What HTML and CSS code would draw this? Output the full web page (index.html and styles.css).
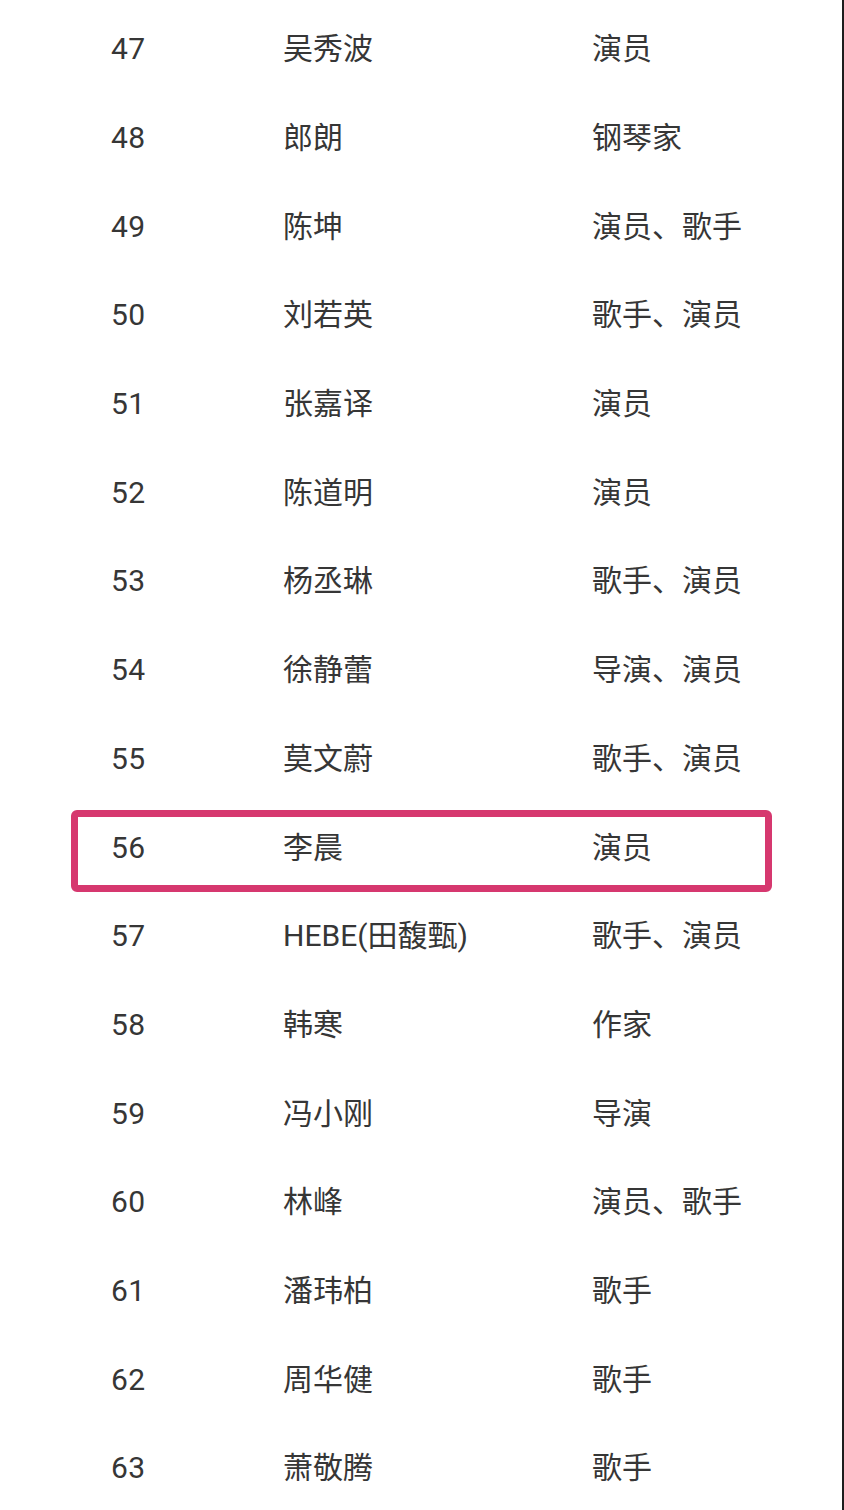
FILE: index.html
```html
<!DOCTYPE html>
<html lang="zh-CN">
<head>
    <meta charset="UTF-8">
    <meta name="viewport" content="width=device-width, initial-scale=1.0">
    <title>名单</title>
    <link rel="stylesheet" href="styles.css">
</head>
<body>
    <div class="page">
        <div class="list">
            <div class="row"><span class="num">47</span><span class="name">吴秀波</span><span class="job">演员</span></div>
            <div class="row"><span class="num">48</span><span class="name">郎朗</span><span class="job">钢琴家</span></div>
            <div class="row"><span class="num">49</span><span class="name">陈坤</span><span class="job">演员、歌手</span></div>
            <div class="row"><span class="num">50</span><span class="name">刘若英</span><span class="job">歌手、演员</span></div>
            <div class="row"><span class="num">51</span><span class="name">张嘉译</span><span class="job">演员</span></div>
            <div class="row"><span class="num">52</span><span class="name">陈道明</span><span class="job">演员</span></div>
            <div class="row"><span class="num">53</span><span class="name">杨丞琳</span><span class="job">歌手、演员</span></div>
            <div class="row"><span class="num">54</span><span class="name">徐静蕾</span><span class="job">导演、演员</span></div>
            <div class="row"><span class="num">55</span><span class="name">莫文蔚</span><span class="job">歌手、演员</span></div>
            <div class="row marked"><span class="num">56</span><span class="name">李晨</span><span class="job">演员</span></div>
            <div class="row"><span class="num">57</span><span class="name">HEBE(田馥甄)</span><span class="job">歌手、演员</span></div>
            <div class="row"><span class="num">58</span><span class="name">韩寒</span><span class="job">作家</span></div>
            <div class="row"><span class="num">59</span><span class="name">冯小刚</span><span class="job">导演</span></div>
            <div class="row"><span class="num">60</span><span class="name">林峰</span><span class="job">演员、歌手</span></div>
            <div class="row"><span class="num">61</span><span class="name">潘玮柏</span><span class="job">歌手</span></div>
            <div class="row"><span class="num">62</span><span class="name">周华健</span><span class="job">歌手</span></div>
            <div class="row"><span class="num">63</span><span class="name">萧敬腾</span><span class="job">歌手</span></div>
        </div>
    </div>
</body>
</html>
```

FILE: styles.css
```css
body {
    margin: 0;
    padding: 0;
    background: #fff;
    font-family: Roboto, "Noto Sans CJK SC", sans-serif;
    color: #363636;
}
.page {
    width: 842px;
    height: 1510px;
    border-right: 2px solid #1e1e1e;
    overflow: hidden;
}
.list {
    padding-top: 5px;
}
.row {
    position: relative;
    display: grid;
    grid-template-columns: 172px 309px 1fr;
    align-items: center;
    height: 88.69px;
    padding-left: 111px;
    font-size: 30px;
    line-height: 1;
}
.num {
    letter-spacing: 0.3px;
}
/* pink box drawn over row 56 */
.marked::after {
    content: "";
    position: absolute;
    left: 71px;
    top: 7px;
    width: 701px;
    height: 82px;
    box-sizing: border-box;
    border: 7px solid #d6386f;
    border-radius: 6px;
}
```
